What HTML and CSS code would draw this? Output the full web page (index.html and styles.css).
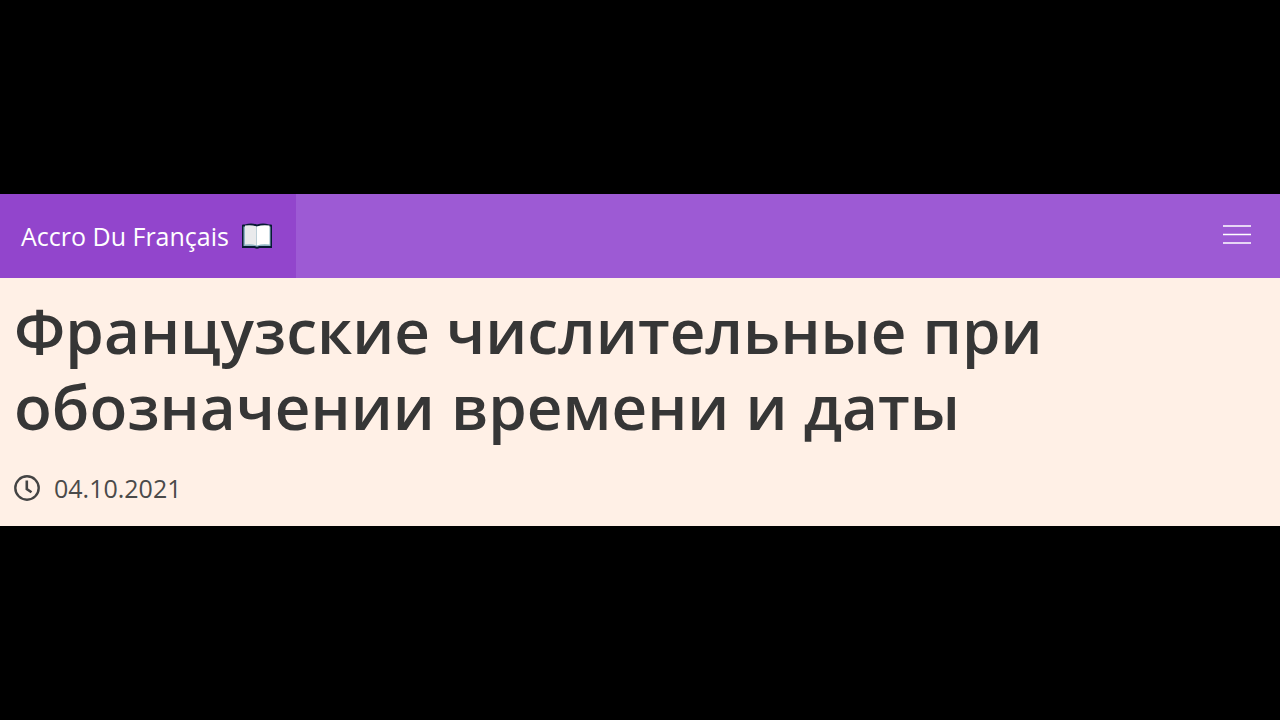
FILE: index.html
```html
<!DOCTYPE html>
<html lang="ru">
<head>
<meta charset="utf-8">
<meta name="viewport" content="width=device-width, initial-scale=1">
<title>Accro Du Français</title>
<link rel="stylesheet" href="styles.css">
</head>
<body>
<div class="page">
  <header class="navbar">
    <a class="brand" href="#">
      <span>Accro Du Français</span>
      <svg class="book" viewBox="0 0 32 26" aria-hidden="true">
        <path d="M1 2.500Q1 1.500 2 1.500H4Q10-.3 16 1.500Q22-.3 28 1.500H30Q31 1.500 31 2.500V25H18.500q-2.500 1.500-5 0H1z" fill="#071b33"/>
        <path d="M2.500 3.500v19.500H14q2 1.500 4 0h11.500V3.500z" fill="#8fb3c2"/>
        <path d="M4 2.500Q11 1.500 15.500 3.500v19Q11 20.500 4 21.500z" fill="#e9eaec"/>
        <path d="M28.500 2.500Q21 1.500 16 3.500v19Q21 20.500 28.500 21.500z" fill="#fff"/>
      </svg>
    </a>
    <button class="menu" type="button" aria-label="Меню">
      <svg class="bars" viewBox="0 0 28 20" aria-hidden="true">
        <path d="M0 2h28M0 10.500h28M0 19h28" stroke="#fff" stroke-width="1.700"/>
      </svg>
    </button>
  </header>
  <main class="article">
    <h1 class="title">Французские числительные при обозначении времени и даты</h1>
    <div class="meta">
      <svg class="clock" viewBox="0 0 26 26" fill="none" stroke="#444" aria-hidden="true">
        <circle cx="13" cy="13" r="11.700" stroke-width="2.400"/>
        <path d="M12.800 5.500v8.500l4.700 3.200" stroke-width="2.600"/>
      </svg>
      <time datetime="2021-10-04">04.10.2021</time>
    </div>
  </main>
</div>
</body>
</html>
```
FILE: styles.css
```css
* {
  box-sizing: border-box;
}

body {
  margin: 0;
  min-height: 100vh;
  display: flex;
  flex-direction: column;
  justify-content: center;
  background: #000;
  font-family: "Open Sans", "Noto Sans", sans-serif;
}

.navbar {
  display: flex;
  justify-content: space-between;
  align-items: stretch;
  min-height: 84px;
  background: #9d5ad4;
}

.brand {
  display: flex;
  align-items: center;
  gap: 12px;
  padding: 0 23px 0 21px;
  background: #9245cc;
  color: #fff;
  font-size: 25px;
  line-height: 40px;
  text-decoration: none;
}

.book {
  width: 32px;
  height: 26px;
}

.menu {
  display: flex;
  align-items: center;
  padding: 0 29px 4px;
  border: 0;
  background: transparent;
  cursor: pointer;
}

.bars {
  width: 28px;
  height: 20px;
}

.article {
  padding: 14px 14px 18px;
  background: #fff0e6;
}

.title {
  margin: 0;
  color: #363636;
  font-size: 62px;
  font-weight: 600;
  line-height: 76px;
}

.meta {
  display: flex;
  align-items: center;
  gap: 14px;
  margin-top: 24px;
  color: #4a4a4a;
  font-size: 25px;
  line-height: 40px;
}

.clock {
  width: 26px;
  height: 26px;
}
```
